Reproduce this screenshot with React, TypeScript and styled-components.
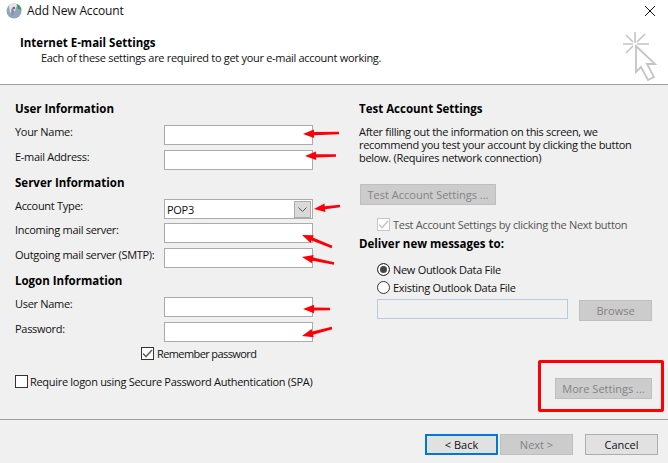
import { FC } from "react";
import styled, { createGlobalStyle } from "styled-components";

const GlobalStyle = createGlobalStyle`
  html, body {
    margin: 0;
    padding: 0;
    background: #f0f0f0;
  }
  * {
    box-sizing: border-box;
  }
`;

const arrows = [
  [303, 134, 339, 133],
  [305, 156, 336, 155.5],
  [314, 209, 340, 206],
  [302, 235, 332, 247],
  [302, 257, 334, 263.5],
  [303, 309, 330, 309],
  [302, 336, 332, 328],
];

const arrowPoints = ([x1, y1, x2, y2]: number[]) => {
  const len = Math.hypot(x2 - x1, y2 - y1);
  const ux = (x2 - x1) / len;
  const uy = (y2 - y1) / len;
  const hx = x1 + ux * 11;
  const hy = y1 + uy * 11;
  const pt = (x: number, y: number, w: number) =>
    `${x - uy * w},${y + ux * w}`;
  return [
    pt(x1, y1, 0),
    pt(hx, hy, 4.2),
    pt(hx, hy, 1.6),
    pt(x2, y2, 1.3),
    pt(x2, y2, -1.3),
    pt(hx, hy, -1.6),
    pt(hx, hy, -4.2),
  ].join(" ");
};

const Field: FC<{ label: string; value?: string; combo?: boolean }> = ({
  label,
  value,
  combo,
}) => (
  <FieldRow>
    <FieldLabel>{label}</FieldLabel>
    <TextBox>
      {value}
      {combo && (
        <ComboButton>
          <svg width="9" height="5" viewBox="0 0 9 5">
            <path d="M0.5 0.5 L4.5 4.5 L8.5 0.5" fill="none" stroke="#555" />
          </svg>
        </ComboButton>
      )}
    </TextBox>
  </FieldRow>
);

const Check = ({ color }: { color: string }) => (
  <svg width="11" height="9" viewBox="0 0 11 9">
    <path d="M1 4.5 L4 7.5 L10 1" fill="none" stroke={color} strokeWidth="1.6" />
  </svg>
);

const App: FC = () => {
  return (
    <Page>
      <GlobalStyle />
      <Header>
        <TitleBar>
          <svg width="16" height="16" viewBox="0 0 16 16">
            <circle cx="8" cy="8" r="7.5" fill="#8fa5bd" />
            <path d="M3 3 C6 0 9 0 11 2 L9 8 L4 10 Z" fill="#dfe7ef" />
            <path d="M11 1 C14 2 15.5 5 15.5 7 L12 6 Z" fill="#3f9a55" />
            <path d="M7 4 L8 9 L6 13 L5 7 Z" fill="#7d8fa6" />
            <circle cx="8" cy="5" r="1.2" fill="#c0484a" />
          </svg>
          <WindowTitle>Add New Account</WindowTitle>
          <CloseIcon width="10" height="10" viewBox="0 0 10 10">
            <path d="M0 0 L10 10 M10 0 L0 10" stroke="#111" strokeWidth="1" />
          </CloseIcon>
        </TitleBar>
        <HeaderText>
          <HeaderTitle>Internet E-mail Settings</HeaderTitle>
          <HeaderSub>
            Each of these settings are required to get your e-mail account
            working.
          </HeaderSub>
        </HeaderText>
        <ClickIcon width="36" height="50" viewBox="0 0 36 50">
          <path
            d="M13 1 V12 M1 13 H11 M15 13 H27 M4 4 L11 11 M23 3 L15 11 M11 15 L4 22"
            stroke="#c4c4c4"
            strokeWidth="1.6"
            fill="none"
          />
          <path
            d="M14 15 L33 33 L25 33 L32 46 L26 49 L19 36 L14 41 Z"
            fill="#fff"
            stroke="#c4c4c4"
            strokeWidth="1.8"
          />
        </ClickIcon>
      </Header>
      <Body>
        <LeftColumn>
          <Section>
            <Heading>User Information</Heading>
            <Field label="Your Name:" />
            <Field label="E-mail Address:" />
          </Section>
          <Section $tight>
            <Heading>Server Information</Heading>
            <Field label="Account Type:" value="POP3" combo />
            <Field label="Incoming mail server:" />
            <Field label="Outgoing mail server (SMTP):" />
          </Section>
          <Section>
            <Heading>Logon Information</Heading>
            <Field label="User Name:" />
            <Field label="Password:" />
          </Section>
          <RememberRow>
            <CheckBox>
              <Check color="#666" />
            </CheckBox>
            Remember password
          </RememberRow>
          <SpaRow>
            <CheckBox />
            Require logon using Secure Password Authentication (SPA)
          </SpaRow>
        </LeftColumn>
        <RightColumn>
          <Heading>Test Account Settings</Heading>
          <Paragraph>
            After filling out the information on this screen, we
            <br />
            recommend you test your account by clicking the button
            <br />
            below. (Requires network connection)
          </Paragraph>
          <TestButton>Test Account Settings ...</TestButton>
          <IndentRow>
            <CheckBox $disabled>
              <Check color="#c8c8c8" />
            </CheckBox>
            <DimText>Test Account Settings by clicking the Next button</DimText>
          </IndentRow>
          <DeliverHeading>Deliver new messages to:</DeliverHeading>
          <RadioRow>
            <Radio $checked />
            New Outlook Data File
          </RadioRow>
          <RadioRow $second>
            <Radio />
            Existing Outlook Data File
          </RadioRow>
          <BrowseRow>
            <PathBox />
            <BrowseButton>Browse</BrowseButton>
          </BrowseRow>
          <MoreRow>
            <MoreButton>More Settings ...</MoreButton>
          </MoreRow>
        </RightColumn>
      </Body>
      <Footer>
        <DialogButton $variant="default">&lt; Back</DialogButton>
        <DialogButton $variant="disabled">Next &gt;</DialogButton>
        <CancelButton>Cancel</CancelButton>
      </Footer>
      <Highlight />
      <Annotations width="668" height="463" viewBox="0 0 668 463">
        {arrows.map((a, i) => (
          <polygon key={i} points={arrowPoints(a)} fill="#fb0007" />
        ))}
      </Annotations>
    </Page>
  );
};

const Page = styled.div`
  position: relative;
  width: 668px;
  height: 463px;
  overflow: hidden;
  display: flex;
  flex-direction: column;
  background: #f0f0f0;
  color: #111;
  font-family: "Open Sans", "Liberation Sans", sans-serif;
  font-size: 11px;
  letter-spacing: -0.3px;
  line-height: 13px;
`;

const Header = styled.header`
  position: relative;
  flex: 0 0 85px;
  background: #fff;
  border-bottom: 1px solid #a0a0a0;
`;

const TitleBar = styled.div`
  display: flex;
  align-items: center;
  height: 22px;
  padding: 0 13px 0 6px;
  gap: 5px;
`;

const WindowTitle = styled.span`
  flex: 1;
  font-size: 12px;
  letter-spacing: -0.15px;
  line-height: 16px;
`;

const CloseIcon = styled.svg`
  display: block;
`;

const HeaderText = styled.div`
  padding: 13px 0 0 20px;
`;

const HeaderTitle = styled.div`
  font-weight: 700;
  font-size: 11.5px;
  letter-spacing: 0;
  line-height: 15px;
  color: #000;
`;

const HeaderSub = styled.div`
  padding-left: 21px;
  line-height: 15px;
`;

const ClickIcon = styled.svg`
  position: absolute;
  top: 31px;
  right: 10px;
`;

const Body = styled.main`
  flex: 0 0 335px;
  display: flex;
  border-bottom: 1px solid #a0a0a0;
`;

const LeftColumn = styled.div`
  width: 359px;
  padding: 16px 0 0 15px;
`;

const Section = styled.section<{ $tight?: boolean }>`
  display: grid;
  row-gap: ${(p) => (p.$tight ? "4.5px" : "5px")};
  width: 298px;
  margin-bottom: 5px;
`;

const Heading = styled.h3`
  margin: 0 0 4px;
  font-size: 11.5px;
  letter-spacing: 0;
  line-height: 15px;
  font-weight: 700;
  color: #000;
`;

const FieldRow = styled.div`
  display: flex;
  justify-content: space-between;
  height: 20px;
`;

const FieldLabel = styled.label`
  line-height: 14px;
  white-space: nowrap;
`;

const TextBox = styled.div`
  position: relative;
  flex: none;
  width: 149px;
  height: 20px;
  padding: 3px 2px;
  line-height: 13px;
  background: #fff;
  border: 1px solid #ababab;
`;

const ComboButton = styled.span`
  position: absolute;
  top: 1px;
  right: 1px;
  width: 17px;
  height: 17px;
  display: flex;
  align-items: center;
  justify-content: center;
  background: #d9d9d9;
  border: 1px solid #adadad;
`;

const CheckBox = styled.span<{ $disabled?: boolean }>`
  flex: none;
  display: flex;
  align-items: center;
  justify-content: center;
  width: 13px;
  height: 13px;
  background: #fff;
  border: 1px solid ${(p) => (p.$disabled ? "#c6c6c6" : "#333")};
`;

const RememberRow = styled.div`
  display: flex;
  align-items: center;
  gap: 3px;
  margin: 1px 0 0 126px;
  letter-spacing: -0.6px;
`;

const SpaRow = styled.div`
  display: flex;
  align-items: center;
  gap: 2px;
  margin-top: 15px;
`;

const RightColumn = styled.div`
  flex: 1;
  padding-top: 16px;
`;

const Paragraph = styled.p`
  margin: 9px 0 0;
  line-height: 13px;
`;

const DisabledButton = styled.div`
  display: flex;
  align-items: center;
  justify-content: center;
  background: #cccccc;
  border: 1px solid #bfbfbf;
  color: #838383;
  letter-spacing: 0;
  white-space: nowrap;
`;

const TestButton = styled(DisabledButton)`
  width: 136px;
  height: 21px;
  margin: 20px 0 0 1px;
`;

const IndentRow = styled.div`
  display: flex;
  align-items: center;
  gap: 3px;
  margin: 13px 0 0 18px;
`;

const DimText = styled.span`
  color: #555;
`;

const DeliverHeading = styled(Heading)`
  margin: 5px 0 0;
`;

const RadioRow = styled.div<{ $second?: boolean }>`
  display: flex;
  align-items: center;
  gap: 3px;
  margin: ${(p) => (p.$second ? "5px" : "12px")} 0 0 18px;
`;

const Radio = styled.span<{ $checked?: boolean }>`
  flex: none;
  width: 13px;
  height: 13px;
  border-radius: 50%;
  border: 1px solid #333;
  box-shadow: ${(p) => (p.$checked ? "inset 0 0 0 2px #fff" : "none")};
  background: ${(p) => (p.$checked ? "#444" : "#fff")};
`;

const BrowseRow = styled.div`
  display: flex;
  align-items: flex-start;
  gap: 11px;
  margin: 5px 0 0 18px;
`;

const PathBox = styled.div`
  width: 191px;
  height: 20px;
  background: #f0f0f0;
  border: 1px solid #b5cbe3;
`;

const BrowseButton = styled(DisabledButton)`
  width: 73px;
  height: 21px;
  margin-top: 1px;
`;

const MoreRow = styled.div`
  display: flex;
  justify-content: flex-end;
  padding-right: 16px;
  margin-top: 57px;
`;

const MoreButton = styled(DisabledButton)`
  width: 97px;
  height: 21px;
`;

const Footer = styled.footer`
  display: flex;
  justify-content: flex-end;
  padding: 14px 10px 0 0;
  gap: 2px;
`;

const DialogButton = styled.div<{ $variant: "default" | "disabled" | "plain" }>`
  display: flex;
  align-items: center;
  justify-content: center;
  width: 73px;
  height: 21px;
  letter-spacing: 0;
  background: ${(p) => (p.$variant === "disabled" ? "#cccccc" : "#e1e1e1")};
  color: ${(p) => (p.$variant === "disabled" ? "#838383" : "#111")};
  border: ${(p) =>
    p.$variant === "default"
      ? "2px solid #0078d7"
      : p.$variant === "disabled"
        ? "1px solid #bfbfbf"
        : "1px solid #adadad"};
`;

const CancelButton = styled(DialogButton).attrs({ $variant: "plain" as const })`
  margin-left: 10px;
`;

const Highlight = styled.div`
  position: absolute;
  left: 538px;
  top: 360px;
  width: 126px;
  height: 52px;
  border: 3px solid #fb0007;
  border-radius: 2px;
`;

const Annotations = styled.svg`
  position: absolute;
  left: 0;
  top: 0;
  pointer-events: none;
`;

export default App;
